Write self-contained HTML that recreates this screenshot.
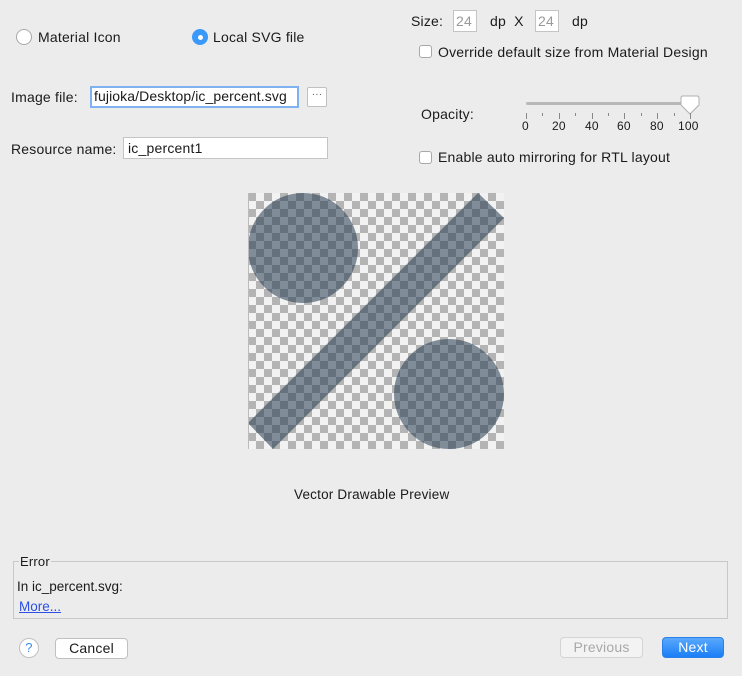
<!DOCTYPE html>
<html><head><meta charset="utf-8"><style>
body{margin:0;width:742px;height:676px;background:#ececec;font-family:"Liberation Sans",sans-serif;font-size:14px;letter-spacing:0.2px;color:#1a1a1a;position:relative;overflow:hidden}
.a{position:absolute;white-space:nowrap}
.inp{position:absolute;background:#fff;border:1px solid #c4c4c4;box-sizing:border-box;padding:0 4px;line-height:18px}
.cb{position:absolute;width:13px;height:13px;border:1px solid #a8a8a8;border-radius:3px;background:#fff;box-sizing:border-box}
.btn{position:absolute;background:#fff;border:1px solid #c0c0c0;border-radius:4px;box-sizing:border-box;text-align:center;line-height:19px}
</style></head><body>
<div class="a" style="left:16px;top:29px;width:16px;height:16px;border:1px solid #a8a8a8;border-radius:50%;background:#fff;box-sizing:border-box"></div>
<div class="a" style="left:38px;top:29px">Material Icon</div>
<div class="a" style="left:192px;top:29px;width:16px;height:16px;border-radius:50%;background:#3b99fc"></div>
<div class="a" style="left:198px;top:35px;width:5px;height:5px;border-radius:50%;background:#fff"></div>
<div class="a" style="left:213px;top:29px">Local SVG file</div>

<div class="a" style="left:11px;top:89px">Image file:</div>
<div class="inp" style="left:90px;top:86px;width:209px;height:22px;border:2px solid #7eb3f0;font-size:14px;letter-spacing:0.1px;line-height:17px;padding-left:2px;overflow:hidden">fujioka/Desktop/ic_percent.svg</div>
<div class="btn" style="left:307px;top:87px;width:20px;height:20px;border-radius:2px;font-size:10px;line-height:14px;color:#555">···</div>
<div class="a" style="left:11px;top:141px">Resource name:</div>
<div class="inp" style="left:123px;top:137px;width:205px;height:22px;line-height:20px">ic_percent1</div>

<div class="a" style="left:411px;top:13px">Size:</div>
<div class="inp" style="left:453px;top:10px;width:24px;height:22px;color:#999;padding:0 2px;line-height:20px">24</div>
<div class="a" style="left:490px;top:13px">dp&nbsp; X</div>
<div class="inp" style="left:535px;top:10px;width:24px;height:22px;color:#999;padding:0 2px;line-height:20px">24</div>
<div class="a" style="left:572px;top:13px">dp</div>
<div class="cb" style="left:419px;top:45px"></div>
<div class="a" style="left:438px;top:44px">Override default size from Material Design</div>

<div class="a" style="left:421px;top:106px">Opacity:</div>
<div class="a" style="left:526px;top:102px;width:164px;height:3px;background:#b8b8b8;border-radius:2px"></div>
<svg class="a" style="left:520px;top:94px" width="190" height="30">
<path d="M162 2h15q2 0 2 2v7l-9 9-9-9v-7q0-2 2-2z" fill="#fff" stroke="#b0b0b0"/>
<g stroke="#888" stroke-width="1">
<path d="M6.5 19v6M39.5 19v6M72.5 19v6M104.5 19v6M137.5 19v6M170.5 19v6"/>
<path d="M22.5 19v3M55.5 19v3M88.5 19v3M121.5 19v3M154.5 19v3"/></g></svg>
<div class="a" style="left:522px;top:119px;font-size:12px">0</div>
<div class="a" style="left:552px;top:119px;font-size:12px">20</div>
<div class="a" style="left:585px;top:119px;font-size:12px">40</div>
<div class="a" style="left:617px;top:119px;font-size:12px">60</div>
<div class="a" style="left:650px;top:119px;font-size:12px">80</div>
<div class="a" style="left:678px;top:119px;font-size:12px">100</div>

<div class="cb" style="left:419px;top:151px"></div>
<div class="a" style="left:438px;top:149px">Enable auto mirroring for RTL layout</div>

<div class="a" style="left:248px;top:193px;width:256px;height:256px;background-color:#f2f2f2;background-image:conic-gradient(#b4b4b4 25%,transparent 0 50%,#b4b4b4 0 75%,transparent 0);background-size:16px 16px;background-position:8px 0"></div>
<svg class="a" style="left:248px;top:193px" width="256" height="256">
<g fill="rgba(45,66,85,0.58)">
<circle cx="55" cy="55" r="55"/><circle cx="201" cy="201" r="55"/>
<polygon points="230,0 256,25 25,256 0,230"/></g></svg>
<div class="a" style="left:248px;top:193px;width:1px;height:256px;background:#bbb"></div>

<div class="a" style="left:294px;top:487px;font-size:13.5px">Vector Drawable Preview</div>

<div class="a" style="left:13px;top:561px;width:715px;height:58px;border:1px solid #c8c8c8;box-sizing:border-box"></div>
<div class="a" style="left:19px;top:554px;background:#ececec;font-size:13px;padding:0 1px">Error</div>
<div class="a" style="left:17px;top:579px;font-size:13.5px;letter-spacing:0">In ic_percent.svg:</div>
<div class="a" style="left:19px;top:599px;font-size:13.5px;letter-spacing:0;color:#2b4fe8;text-decoration:underline">More...</div>

<div class="a" style="left:19px;top:638px;width:20px;height:20px;border:1px solid #c0c0c0;border-radius:50%;background:#fff;box-sizing:border-box;text-align:center;color:#3b8ef0;line-height:18px;font-size:13px">?</div>
<div class="btn" style="left:55px;top:638px;width:73px;height:21px">Cancel</div>
<div class="btn" style="left:560px;top:637px;width:83px;height:21px;background:#f3f3f3;color:#a8a8a8;border-color:#d4d4d4">Previous</div>
<div class="btn" style="left:662px;top:637px;width:62px;height:21px;background:linear-gradient(#5aa9fc,#1a7ef7);border-color:#2b7fe8;color:#fff">Next</div>
</body></html>
